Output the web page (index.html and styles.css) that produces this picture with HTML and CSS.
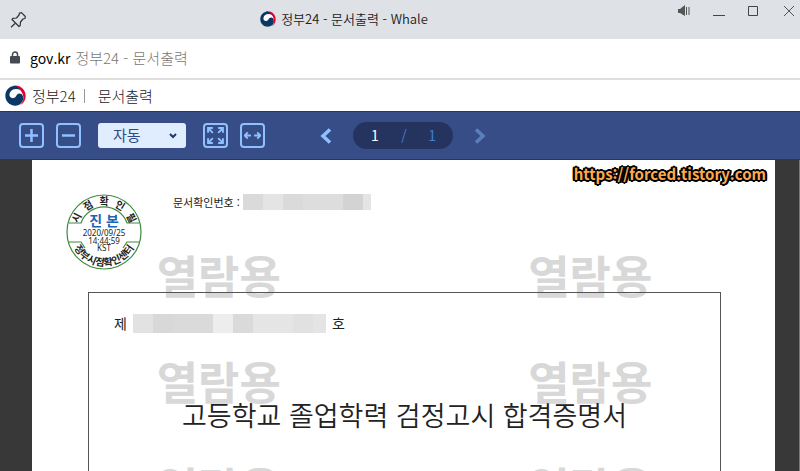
FILE: index.html
```html
<!DOCTYPE html>
<html lang="ko">
<head>
  <meta charset="UTF-8">
  <meta name="viewport" content="width=device-width, initial-scale=1.0">
  <title>정부24 - 문서출력</title>
  <link rel="stylesheet" href="styles.css">
</head>
<body>

  <!-- Shared logo -->
  <svg class="symbols" aria-hidden="true">
    <symbol id="logo" viewBox="0 0 64 64">
      <circle cx="32" cy="32" r="31" fill="#fff"/>
      <path fill="#e4032e" d="M22 3C42-4 63 11 63 33c0 13-7 24-18 29 9-9 13-19 10-31C51 17 40 7 22 3z"/>
      <path fill="#0b3764" d="M34 4C16 0 1 15 1 33c0 17 13 30 30 30 16 0 27-13 24-28-2-10-13-12-18-6-4 5-5 11-13 11-7 0-12-6-10-14C16 17 24 12 34 12c5 0 9 1 12 3-3-5-7-9-12-11z"/>
    </symbol>
  </svg>

  <!-- Window title bar -->
  <header class="titlebar">
    <button class="icon-btn pin" aria-label="고정">
      <svg width="16" height="16" viewBox="0 0 16 16" fill="none" stroke="#333" stroke-width="1.2" stroke-linejoin="round">
        <path d="M9.500 1 11.500.7l3.800 3.800-.3 2-2 .5-2.500 3-.3 3.500-1.200 1L2 7.500l1-1.200 3.500-.3 2.500-3zM5 11.500 1 15.300"/>
      </svg>
    </button>
    <div class="window-title">
      <svg class="logo-small"><use href="#logo"/></svg>
      <span>정부24 - 문서출력 - Whale</span>
    </div>
    <div class="window-controls">
      <button class="icon-btn" aria-label="음소거">
        <svg width="12" height="12" viewBox="0 0 12 12" fill="#555"><path d="M0 4h2l5-4v11L2 8H0zM8 2h1v8H8zM10.500 2h1v8h-1z"/></svg>
      </button>
      <button class="icon-btn" aria-label="최소화">
        <svg width="12" height="12" viewBox="0 0 12 12" fill="#444"><path d="M0 10h12v1H0z"/></svg>
      </button>
      <button class="icon-btn" aria-label="최대화">
        <svg width="12" height="12" viewBox="0 0 12 12" fill="none" stroke="#444"><path d="M.5 1.500h9v9h-9z"/></svg>
      </button>
      <button class="icon-btn" aria-label="닫기">
        <svg width="12" height="12" viewBox="0 0 12 12" fill="none" stroke="#555"><path d="m1 1 10 10M11 1 1 11"/></svg>
      </button>
    </div>
  </header>

  <!-- Address bar -->
  <div class="address">
    <svg width="10" height="13" viewBox="0 0 10 13">
      <path d="M2.500 6V3.500a2.500 2.500 0 0 1 5 0V6" fill="none" stroke="#454b50" stroke-width="1.500"/>
      <rect y="5" width="10" height="7.500" rx="1" fill="#454b50"/>
    </svg>
    <span class="domain">gov.kr</span>
    <span class="page-name">정부24 - 문서출력</span>
  </div>

  <!-- Site header -->
  <div class="site-header">
    <svg class="logo"><use href="#logo"/></svg>
    <span class="site-name">정부24</span>
    <span class="site-page">문서출력</span>
  </div>

  <!-- Viewer toolbar -->
  <nav class="toolbar">
    <button class="tool" aria-label="확대">
      <svg width="15" height="15" viewBox="0 0 15 15"><path d="M7.500 1v13M1 7.500h13"/></svg>
    </button>
    <button class="tool" aria-label="축소">
      <svg width="15" height="15" viewBox="0 0 15 15"><path d="M1 7.500h13"/></svg>
    </button>
    <select class="zoom" aria-label="배율">
      <option>자동</option>
      <option>100%</option>
    </select>
    <button class="tool" aria-label="쪽 맞춤">
      <svg class="arrows" width="17" height="17" viewBox="0 0 16 16">
        <path d="M1 5.500V1h4.500M10.500 1H15v4.500M15 10.500V15h-4.500M5.500 15H1v-4.500M1.500 1.500l4 4M14.500 1.500l-4 4M14.500 14.500l-4-4M1.500 14.500l4-4"/>
      </svg>
    </button>
    <button class="tool" aria-label="폭 맞춤">
      <svg class="arrows" width="17" height="17" viewBox="0 0 16 16">
        <path d="M0 8h6.500M9.500 8H16M3.500 5 .7 8l2.800 3M12.500 5l2.800 3-2.800 3"/>
      </svg>
    </button>
    <div class="pager">
      <button class="icon-btn" aria-label="이전 쪽">
        <svg width="12" height="16" viewBox="0 0 12 16" fill="none" stroke="#8fc1ff" stroke-width="3.500"><path d="M10 1.500 3 8l7 6.500"/></svg>
      </button>
      <div class="page-box">
        <input type="text" value="1" aria-label="현재 쪽">
        <span>/</span>
        <span>1</span>
      </div>
      <button class="icon-btn" aria-label="다음 쪽">
        <svg width="12" height="16" viewBox="0 0 12 16" fill="none" stroke="#5b80be" stroke-width="3.500"><path d="m2 1.500 7 6.500-7 6.500"/></svg>
      </button>
    </div>
  </nav>

  <!-- Document -->
  <main class="viewer">
    <article class="paper">
      <div class="watermarks" aria-hidden="true">
        <span>열람용</span><span>열람용</span>
        <span>열람용</span><span>열람용</span>
        <span>열람용</span><span>열람용</span>
      </div>
      <a class="source" href="https://forced.tistory.com">https://forced.tistory.com</a>

      <div class="doc-head">
        <svg class="stamp" width="76" height="76" viewBox="0 0 76 76">
          <defs>
            <path id="arc-top" d="M12 45a27 27 0 1 1 52 0"/>
            <path id="arc-bottom" d="M4 38a34 34 0 0 0 68 0"/>
          </defs>
          <g fill="none" stroke="#3f8a3f" stroke-width="1.200">
            <circle cx="38" cy="38" r="37"/>
            <path d="M3 29h12a24.500 24.500 0 0 1 46 0h12M3 48h12l4 6M73 48H61l-4 6"/>
          </g>
          <g class="stamp-ring">
            <text><textPath href="#arc-top" startOffset="50%">시 &#160;점 &#160;확 &#160;인 &#160;필</textPath></text>
            <text><textPath href="#arc-bottom" startOffset="50%">정부시점확인센터</textPath></text>
          </g>
          <text class="stamp-title" x="38" y="32">진 본</text>
          <g class="stamp-date">
            <text x="38" y="42">2020/09/25</text>
            <text x="38" y="50">14:44:59</text>
            <text x="38" y="57">KST</text>
          </g>
        </svg>
        <p class="doc-number">문서확인번호 : <span class="redacted number-mask"></span></p>
      </div>

      <section class="frame">
        <p class="serial">제 <span class="redacted serial-mask"></span> 호</p>
        <h1>고등학교 졸업학력 검정고시 합격증명서</h1>
      </section>
    </article>
  </main>

</body>
</html>
```
FILE: styles.css
```css
* {
  box-sizing: border-box;
}

body {
  margin: 0;
  height: 100vh;
  display: flex;
  flex-direction: column;
  overflow: hidden;
  font-family: "Noto Sans CJK KR", sans-serif;
  color: #222;
  background: #fff;
}

.symbols {
  display: none;
}

button {
  padding: 0;
  border: 0;
  background: none;
  cursor: pointer;
}

.icon-btn {
  display: flex;
}

/* Title bar */
.titlebar {
  display: flex;
  flex: none;
  height: 39px;
  padding: 0 5px 0 10px;
  background: #dee1e6;
}

.pin {
  align-items: center;
  width: 28px;
}

.window-title {
  flex: 1;
  display: flex;
  align-items: center;
  justify-content: center;
  gap: 5px;
  padding-bottom: 2px;
  font-size: 13px;
  font-weight: 350;
}

.logo-small {
  width: 16px;
  height: 16px;
}

.window-controls {
  display: flex;
  align-items: flex-start;
  gap: 23px;
  padding: 5px 0 0 28px;
}

/* Address bar */
.address {
  display: flex;
  flex: none;
  align-items: center;
  height: 41px;
  padding: 0 10px 2px;
  border-bottom: 2px solid #dedede;
  font-size: 15px;
  font-weight: 300;
}

.domain {
  margin: 0 5px 0 10px;
  color: #000;
  font-size: 14px;
  font-weight: 400;
}

.page-name {
  color: #777;
}

/* Site header */
.site-header {
  display: flex;
  flex: none;
  align-items: center;
  height: 31px;
  padding: 0 5px;
  font-size: 15px;
  font-weight: 300;
  line-height: 14px;
  color: #222;
}

.logo {
  width: 21px;
  height: 21px;
  margin-right: 6px;
}

.site-name {
  padding-right: 8px;
  border-right: 1px solid #999;
}

.site-page {
  padding-left: 13px;
}

/* Toolbar */
.toolbar {
  display: flex;
  flex: none;
  align-items: center;
  gap: 12px;
  height: 49px;
  padding: 0 19px;
  background: #364d87;
  border-top: 1px solid #22376b;
  border-bottom: 1px solid #22376b;
}

.tool {
  display: flex;
  align-items: center;
  justify-content: center;
  width: 25px;
  height: 25px;
  border: 2px solid #8fc1ff;
  border-radius: 4px;
}

.tool svg {
  flex: none;
  fill: none;
  stroke: #8fc1ff;
  stroke-width: 2.5;
}

.tool .arrows {
  stroke-width: 1.8;
}

.zoom {
  appearance: none;
  width: 88px;
  height: 25px;
  margin: 0 5px;
  padding: 0 15px 1px;
  border: 0;
  border-radius: 3px;
  background: #e0edff url("data:image/svg+xml,%3Csvg xmlns='http://www.w3.org/2000/svg' width='8' height='6' fill='none' stroke='%2322376b' stroke-width='2'%3E%3Cpath d='m1 1 3 3 3-3'/%3E%3C/svg%3E") no-repeat right 9px center;
  color: #2f4a86;
  font-family: inherit;
  font-size: 15px;
  line-height: 22px;
}

.pager {
  display: flex;
  align-items: center;
  gap: 21px;
  margin-left: 43px;
}

.page-box {
  display: flex;
  align-items: center;
  justify-content: space-between;
  width: 100px;
  height: 27px;
  padding: 0 17px 1px;
  border-radius: 14px;
  background: #24345f;
  color: #3f7fd0;
  font-size: 14px;
}

.page-box input {
  width: 10px;
  padding: 0;
  border: 0;
  background: none;
  color: #fff;
  font: inherit;
  text-align: center;
}

/* Viewer */
.viewer {
  flex: 1;
  display: flex;
  min-height: 0;
  padding: 0 24px 0 32px;
  background: #383838;
  border-right: 1px solid #777;
}

.paper {
  position: relative;
  flex: 1;
  padding: 34px 54px 0 56px;
  background: #fff;
  overflow: hidden;
}

.watermarks {
  position: absolute;
  top: 83px;
  left: 1px;
  right: -1px;
  display: grid;
  grid-template-columns: 1fr 1fr;
  grid-auto-rows: 106px;
  color: #d8d8d8;
  font-size: 45px;
  font-weight: 700;
  line-height: 64px;
  text-align: center;
}

.source {
  position: absolute;
  top: 4px;
  right: 9px;
  color: #ffa94d;
  font-size: 15px;
  font-weight: 700;
  line-height: 20px;
  text-decoration: none;
  text-shadow: -2px 0 #000, 2px 0 #000, 0 -2px #000, 0 2px #000,
    -1px -1px #000, 1px -1px #000, -1px 1px #000, 1px 1px #000,
    -2px -1px #000, 2px -1px #000, -2px 1px #000, 2px 1px #000;
}

.doc-head {
  position: relative;
  display: flex;
  gap: 31px;
  margin-left: -22px;
}

.stamp {
  flex: none;
}

.stamp text {
  text-anchor: middle;
}

.stamp-ring {
  fill: #222;
  font-size: 10px;
  font-weight: 700;
}

.stamp-title {
  fill: #1c66b8;
  font-size: 14px;
  font-weight: 700;
}

.stamp-date {
  fill: #222;
  font-family: "Noto Sans", sans-serif;
  font-size: 8px;
}

.doc-number {
  display: flex;
  align-items: center;
  gap: 3px;
  height: 16px;
  margin: 0;
  font-size: 11px;
}

.redacted {
  display: inline-block;
}

.number-mask {
  width: 128px;
  height: 16px;
  background: linear-gradient(90deg, #dadada 20px, #e4e4e4 20px 40px, #dadada 40px 60px, #dddddd 60px 100px, #d3d3d3 100px 120px, #e4e4e4 120px);
}

.frame {
  position: relative;
  height: 100%;
  margin-top: 22px;
  padding: 20px 25px;
  border: 1px solid #555;
}

.serial {
  display: flex;
  align-items: center;
  gap: 6px;
  height: 20px;
  margin: 0;
  font-size: 14px;
}

.serial-mask {
  width: 193px;
  height: 19px;
  background: linear-gradient(90deg, #e2e2e2 20px, #d8d8d8 20px 40px, #dadada 40px 80px, #ededed 80px 100px, #dadada 100px 120px, #e5e5e5 120px 160px, #e1e1e1 160px 180px, #e4e4e4 180px);
}

h1 {
  margin: 62px 0 0;
  font-size: 27px;
  font-weight: 350;
  line-height: 40px;
  text-align: center;
}
```
